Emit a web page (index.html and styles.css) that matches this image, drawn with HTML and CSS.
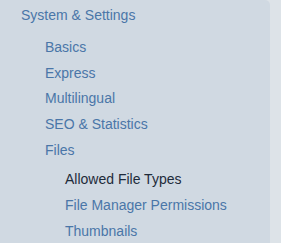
FILE: index.html
```html
<!DOCTYPE html>
<html>
<head>
<meta charset="utf-8">
<link rel="stylesheet" href="styles.css">
</head>
<body>
<nav class="panel">
  <div class="title">System &amp; Settings</div>
  <ul class="menu">
    <li><a class="link">Basics</a></li>
    <li><a class="link">Express</a></li>
    <li><a class="link">Multilingual</a></li>
    <li><a class="link">SEO &amp; Statistics</a></li>
    <li><a class="link">Files</a>
      <ul class="submenu">
        <li><a class="link active">Allowed File Types</a></li>
        <li><a class="link">File Manager Permissions</a></li>
        <li><a class="link">Thumbnails</a></li>
      </ul>
    </li>
  </ul>
</nav>
</body>
</html>
```
FILE: styles.css
```css
html, body {
  margin: 0;
  padding: 0;
  height: 100%;
  background: #dde3e8;
  font-family: "Liberation Sans", Arial, sans-serif;
  font-size: 14px;
}
.panel {
  width: 270px;
  height: 100%;
  box-sizing: border-box;
  background: #d0d9e2;
  border-top-right-radius: 5px;
  padding-top: 2.6px;
}
.title {
  line-height: 25.6px;
  padding-left: 21px;
  color: #4a76a8;
}
.menu {
  list-style: none;
  margin: 6.6px 0 0 0;
  padding: 0 0 0 45px;
}
.submenu {
  list-style: none;
  margin: 3px 0 0 0;
  padding: 0 0 0 20px;
}
.link {
  display: block;
  line-height: 25.85px;
  color: #4a76a8;
  text-decoration: none;
}
.link.active {
  color: #1e2b3a;
}
```
